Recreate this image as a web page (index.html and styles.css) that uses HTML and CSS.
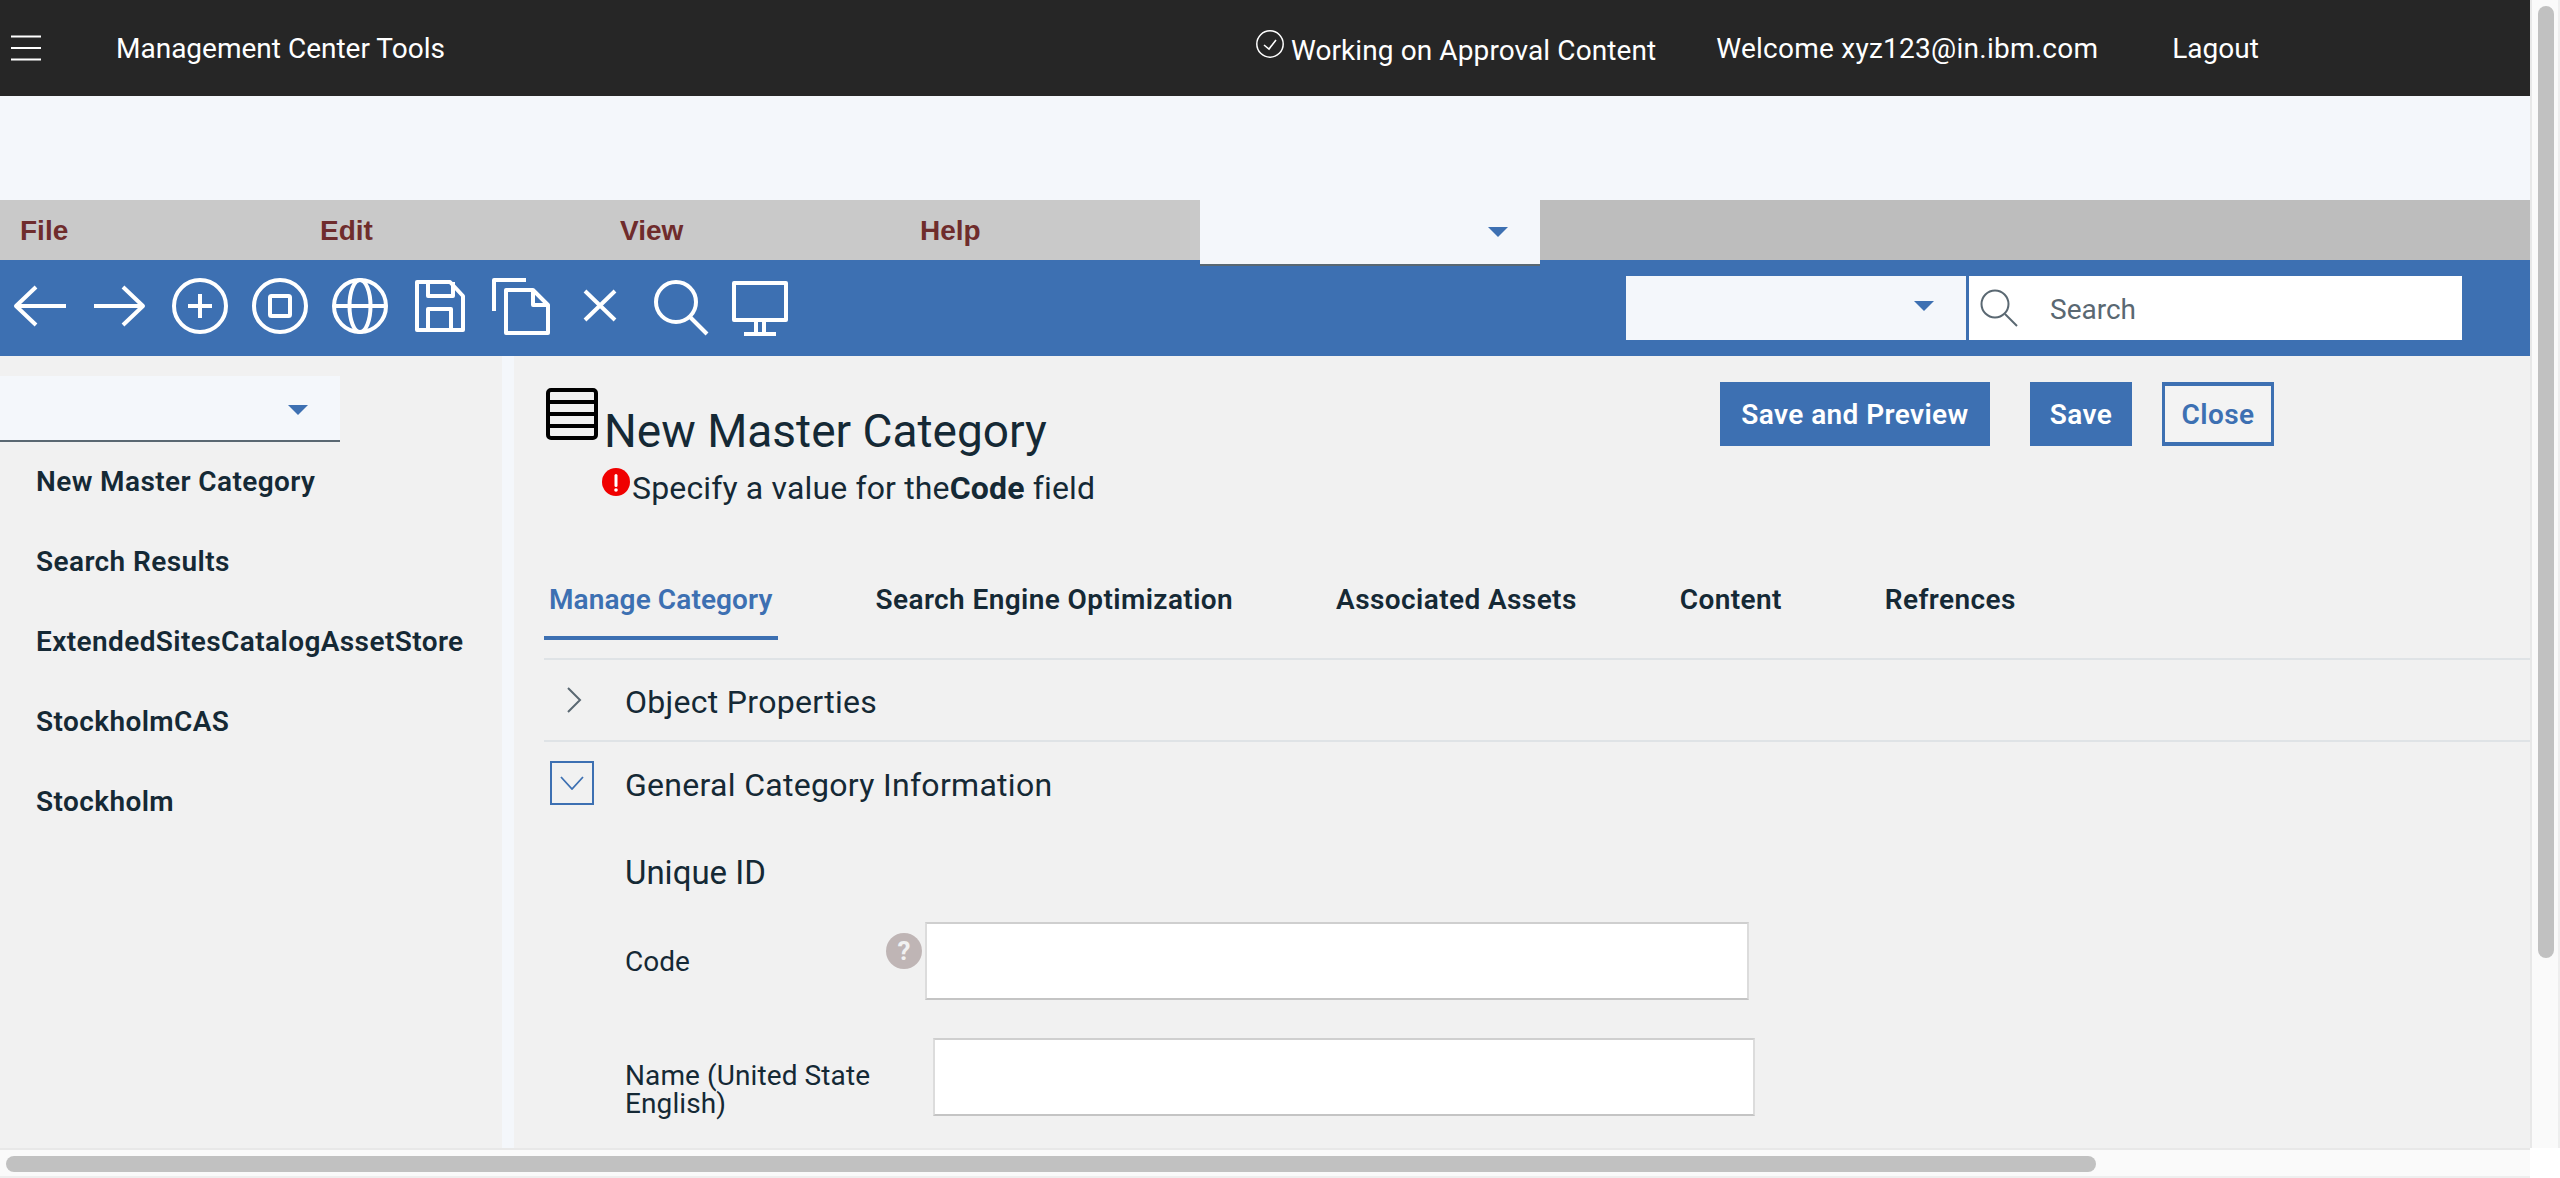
FILE: index.html
```html
<!doctype html>
<html lang="en">
<head>
    <meta charset="UTF-8">
    <title>Management Center Tools</title>
    <link rel="stylesheet" href="styles.css">
</head>
<body>
<div class="window">
    <div class="viewport">
        <header class="topbar">
            <svg class="burger" width="30" height="26" viewBox="0 0 30 26"><path d="M0 1.5h30M0 13h30M0 24.5h30" stroke="#fff" stroke-width="2" fill="none"/></svg>
            <span class="app-name">Management Center Tools</span>
            <svg class="check" width="28" height="28" viewBox="0 0 28 28"><circle cx="14" cy="14" r="13.200" stroke="#fff" stroke-width="1.500" fill="none"/><path d="M8 15l5 4 7-9" stroke="#fff" stroke-width="1.600" fill="none"/></svg>
            <span class="status">Working on Approval Content</span>
            <span class="welcome">Welcome xyz123@in.ibm.com</span>
            <span class="logout">Lagout</span>
        </header>

        <div class="band"></div>

        <nav class="menubar">
            <span class="menu-item">File</span>
            <span class="menu-item">Edit</span>
            <span class="menu-item">View</span>
            <span class="menu-item">Help</span>
            <div class="menu-select"><i class="caret"></i></div>
        </nav>

        <div class="toolbar">
            <svg class="tool" viewBox="0 0 80 64"><path d="M66 32H16M36 13L16 32l20 19"/></svg>
            <svg class="tool" viewBox="0 0 80 64"><path d="M14 32h49M43 13l20 19-20 19"/></svg>
            <svg class="tool" viewBox="0 0 80 64"><circle cx="40" cy="32" r="26"/><path d="M40 20v24M28 32h24"/></svg>
            <svg class="tool" viewBox="0 0 80 64"><circle cx="40" cy="32" r="26"/><rect x="30" y="22" width="20" height="20" rx="1.500"/></svg>
            <svg class="tool" viewBox="0 0 80 64"><circle cx="40" cy="32" r="26"/><ellipse cx="40" cy="32" rx="10.500" ry="26"/><path d="M14 32h52"/></svg>
            <svg class="tool" viewBox="0 0 80 64"><path d="M17 8h33l13 14v34H17zM28 8v14h25V8M28 56V35h23v21"/></svg>
            <svg class="tool" viewBox="0 0 80 64"><path d="M14 37V6h32M26 16h27l15 15v28H26zM53 16v15h15"/></svg>
            <svg class="tool" viewBox="0 0 80 64"><path d="M25 17l30 29M55 17L25 46"/></svg>
            <svg class="tool" viewBox="0 0 80 64"><circle cx="36" cy="28" r="20"/><path d="M50 43l17 17"/></svg>
            <svg class="tool" viewBox="0 0 80 64"><path d="M14 9h52v37H14zM36 46v13M44 46v13M24 60h32"/></svg>

            <div class="tool-select"><i class="caret"></i></div>
            <div class="tool-search">
                <svg class="search-icon" width="38" height="38" viewBox="0 0 38 38"><circle cx="15" cy="15" r="13.500"/><path d="M25 25l12 12"/></svg>
                <span class="search-text">Search</span>
            </div>
        </div>

        <div class="workspace">
            <aside class="sidebar">
                <div class="side-select"><i class="caret"></i></div>
                <ul class="side-list">
                    <li>New Master Category</li>
                    <li>Search Results</li>
                    <li>ExtendedSitesCatalogAssetStore</li>
                    <li>StockholmCAS</li>
                    <li>Stockholm</li>
                </ul>
            </aside>
            <div class="strip"></div>
            <main class="content">
                <div class="page-head">
                    <div class="title-col">
                        <div class="title-row">
                            <svg class="title-icon" width="52" height="52" viewBox="0 0 52 52"><rect x="2" y="2" width="48" height="48" rx="3"/><path d="M2 14h48M2 26h48M2 38h48"/></svg>
                            <h1 class="page-title">New Master Category</h1>
                        </div>
                        <div class="error-row">
                            <svg class="error-icon" width="28" height="28" viewBox="0 0 28 28"><circle cx="14" cy="14" r="14" fill="#f00000"/><rect x="12.500" y="6" width="3" height="13" rx="1.500" fill="#fff"/><circle cx="14" cy="22" r="1.800" fill="#fff"/></svg>
                            <span class="error-text">Specify a value for the<b>Code</b> field</span>
                        </div>
                    </div>
                    <div class="actions">
                        <button class="btn">Save and Preview</button>
                        <button class="btn btn-save">Save</button>
                        <button class="btn btn-outline">Close</button>
                    </div>
                </div>

                <div class="tabs">
                    <span class="tab tab-active">Manage Category</span>
                    <span class="tab">Search Engine Optimization</span>
                    <span class="tab">Associated Assets</span>
                    <span class="tab">Content</span>
                    <span class="tab">Refrences</span>
                </div>

                <div class="section">
                    <span class="toggle">
                        <svg class="chevron-right" width="16" height="26" viewBox="0 0 16 26"><path d="M2 1l12 12L2 25" stroke="#5a6872" stroke-width="2" fill="none"/></svg>
                    </span>
                    <span class="section-title">Object Properties</span>
                </div>
                <div class="section section-open">
                    <span class="toggle toggle-open">
                        <svg width="24" height="14" viewBox="0 0 24 14"><path d="M1 1l11 12L23 1" stroke="#3d70b2" stroke-width="1.800" fill="none"/></svg>
                    </span>
                    <span class="section-title">General Category Information</span>
                </div>

                <div class="form">
                    <div class="form-heading">Unique ID</div>
                    <div class="form-row">
                        <label class="field-label field-code">Code</label>
                        <span class="help">?</span>
                        <input class="field" type="text">
                    </div>
                    <div class="form-row form-row-name">
                        <label class="field-label field-name">Name (United State English)</label>
                        <input class="field" type="text">
                    </div>
                </div>
            </main>
        </div>
    </div>
    <div class="vscroll"><div class="vthumb"></div></div>
    <div class="hscroll"><div class="hthumb"></div></div>
    <div class="corner"></div>
</div>
</body>
</html>
```

FILE: styles.css
```css
* {
    box-sizing: border-box;
}
html, body {
    margin: 0;
    height: 100%;
    overflow: hidden;
    background: #fff;
}
body {
    font-family: Roboto, "Noto Sans", sans-serif;
    color: #152935;
}
.window {
    display: grid;
    grid-template-columns: 2530px 30px;
    grid-template-rows: 1148px 30px;
    width: 2560px;
    height: 1178px;
}
.viewport {
    overflow: hidden;
    display: flex;
    flex-direction: column;
}

/* top bar */
.topbar {
    height: 96px;
    flex: none;
    display: flex;
    align-items: center;
    background: #262626;
    color: #fff;
    font-size: 28px;
}
.burger {
    margin-left: 11px;
}
.app-name {
    margin-left: 75px;
}
.check {
    margin-left: 811px;
    margin-top: -8px;
}
.status {
    margin-left: 7px;
    margin-top: 4px;
    letter-spacing: 0.1px;
}
.welcome {
    margin-left: 60px;
    letter-spacing: 0.25px;
}
.logout {
    margin-left: 74px;
}
.band {
    height: 104px;
    flex: none;
    background: #f4f7fb;
}

/* menu */
.menubar {
    height: 60px;
    flex: none;
    display: flex;
    background: #bdbdbd;
    position: relative;
    z-index: 2;
}
.menu-item {
    width: 300px;
    padding: 1px 0 0 20px;
    background: #c9c9c9;
    font-family: "Liberation Sans", Arial, sans-serif;
    font-weight: bold;
    font-size: 28px;
    line-height: 60px;
    color: #6f2c2c;
}
.menu-select {
    width: 340px;
    height: 66px;
    background: #f4f7fb;
    border-bottom: 2px solid #5a6872;
    position: relative;
}
.caret {
    position: absolute;
    width: 0;
    height: 0;
    border-left: 10px solid transparent;
    border-right: 10px solid transparent;
    border-top: 10px solid #3d70b2;
}
.menu-select .caret {
    left: 288px;
    top: 27px;
}

/* toolbar */
.toolbar {
    height: 96px;
    flex: none;
    display: flex;
    align-items: center;
    background: #3d70b2;
}
.tool {
    width: 80px;
    height: 64px;
    margin-top: -4px;
    fill: none;
    stroke: #fff;
    stroke-width: 4;
    stroke-linejoin: round;
}
.tool-select {
    width: 340px;
    height: 64px;
    margin-left: 826px;
    background: #f4f7fb;
    position: relative;
}
.tool-select .caret {
    left: 288px;
    top: 25px;
}
.tool-search {
    width: 493px;
    height: 64px;
    margin-left: 3px;
    background: #fff;
    display: flex;
    align-items: center;
    padding-left: 11px;
}
.search-icon {
    fill: none;
    stroke: #5a6872;
    stroke-width: 2;
}
.search-text {
    margin: 2px 0 0 32px;
    font-size: 28px;
    color: #5a6872;
}

/* workspace */
.workspace {
    flex: 1;
    display: flex;
    background: #f1f1f1;
}
.sidebar {
    width: 502px;
    flex: none;
    padding-top: 20px;
}
.side-select {
    width: 340px;
    height: 66px;
    background: #f4f7fb;
    border-bottom: 2px solid #5a6872;
    position: relative;
}
.side-select .caret {
    left: 288px;
    top: 29px;
}
.side-list {
    list-style: none;
    margin: 0;
    padding: 0 0 0 36px;
}
.side-list li {
    height: 80px;
    line-height: 80px;
    font-size: 28px;
    font-weight: 600;
    letter-spacing: 0.4px;
}
.strip {
    width: 12px;
    flex: none;
    background: #f4f7fb;
}
.content {
    flex: 1;
    padding-left: 30px;
    min-width: 0;
}

.page-head {
    display: flex;
    height: 204px;
}
.title-col {
    padding-top: 32px;
}
.title-row {
    display: flex;
    margin-left: 2px;
}
.title-icon {
    flex: none;
    fill: none;
    stroke: #000;
    stroke-width: 4;
}
.page-title {
    margin: 15px 0 0 6px;
    font-size: 46px;
    line-height: 56px;
    font-weight: 400;
}
.error-row {
    display: flex;
    align-items: flex-start;
    margin: -5px 0 0 58px;
    padding-top: 14px;
}
.error-text {
    margin: 0 0 0 2px;
    font-size: 32px;
    line-height: 40px;
    letter-spacing: 0.15px;
}
.error-text b {
    font-weight: 700;
}
.actions {
    display: flex;
    padding-top: 26px;
    margin-left: auto;
    margin-right: 256px;
}
.btn {
    height: 64px;
    padding: 0;
    width: 270px;
    border: 0;
    background: #3d70b2;
    color: #fff;
    font: 600 28px Roboto, "Noto Sans", sans-serif;
    letter-spacing: 0.4px;
}
.btn-save {
    width: 102px;
    margin-left: 40px;
}
.btn-outline {
    width: 112px;
    margin-left: 30px;
    background: #f3f3f3;
    border: 3px solid #3d70b2;
    border-top-width: 4px;
    border-bottom-width: 4px;
    color: #3d70b2;
}

/* tabs */
.tabs {
    display: flex;
    gap: 93px;
    height: 80px;
}
.tab {
    height: 80px;
    padding: 22px 5px 0;
    font-size: 28px;
    line-height: 36px;
    font-weight: 600;
    letter-spacing: 0.4px;
}
.tab-active {
    color: #3d70b2;
    border-bottom: 4px solid #3d70b2;
    letter-spacing: 0.1px;
}

/* sections */
.section {
    height: 82px;
    margin-top: 18px;
    display: flex;
    align-items: center;
    border-top: 2px solid #dfe3e6;
    padding-left: 6px;
}
.section-open {
    margin-top: 0;
    height: 84px;
}
.toggle {
    width: 44px;
    height: 44px;
    display: flex;
    align-items: center;
    justify-content: center;
    flex: none;
}
.toggle-open {
    border: 2px solid #3d70b2;
}
.chevron-right {
    margin-left: 4px;
}
.section-title {
    margin-left: 31px;
    padding-top: 4px;
    font-size: 32px;
    letter-spacing: 0.3px;
    color: #152935;
}

/* form */
.form {
    padding-left: 81px;
}
.form-heading {
    margin-top: 29px;
    font-size: 33px;
    line-height: 40px;
}
.form-row {
    display: flex;
    margin-top: 29px;
    height: 78px;
}
.form-row-name {
    margin-top: 38px;
}
.field-label {
    font-size: 28px;
    line-height: 28px;
}
.field-code {
    width: 261px;
    padding-top: 26px;
}
.field-name {
    width: 308px;
    padding: 24px 30px 0 0;
    letter-spacing: 0.1px;
}
.help {
    width: 36px;
    height: 36px;
    flex: none;
    margin: 11px 3px 0 0;
    border-radius: 50%;
    background: #bfb5b5;
    color: #f1f1f1;
    font-size: 26px;
    font-weight: 700;
    line-height: 36px;
    text-align: center;
}
.field {
    width: 824px;
    height: 78px;
    background: #fff;
    border: 2px solid #c4c4c4;
    border-color: #cfcfcf #dcdcdc #c4c4c4;
    padding: 0;
    outline: 0;
}
.form-row-name .field {
    width: 822px;
}

/* scrollbars */
.vscroll {
    background: #fafafa;
    border-left: 2px solid #e8e8e8;
    border-right: 2px solid #eee;
    padding: 6px 4px 0 6px;
}
.vthumb {
    height: 952px;
    background: #c1c1c1;
    border-radius: 8px;
}
.hscroll {
    background: #fafafa;
    border-top: 2px solid #e8e8e8;
    border-bottom: 2px solid #eee;
    padding: 6px 0 0 6px;
}
.hthumb {
    width: 2090px;
    height: 16px;
    background: #c1c1c1;
    border-radius: 8px;
}
.corner {
    background: #fff;
}
```
